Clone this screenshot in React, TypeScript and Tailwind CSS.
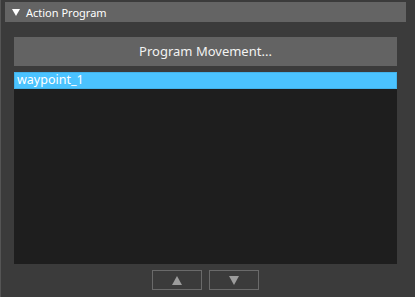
export default function App() {
	return (
		<div className="w-[415px] h-[297px] bg-[#3b3b3b] flex font-['Noto_Sans',sans-serif] text-white overflow-hidden">
			{/* left edge line */}
			<div className="w-px bg-[#555555]" />
			<div className="flex-1 flex flex-col pt-[2px]">
				{/* section header */}
				<div className="ml-[4px] mr-[9px] h-[20px] bg-[#646464] flex items-center pl-[7px] gap-[6px]">
					<svg width="8" height="7" viewBox="0 0 8 7">
						<polygon points="0,0 8,0 4,7" fill="#ffffff" />
					</svg>
					<span className="text-[11px] leading-none">Action Program</span>
				</div>

				<div className="ml-[13px] mr-[18px] mt-[15px] flex flex-col">
					<button
						type="button"
						className="h-[29px] bg-[#636363] text-[13px] text-[#f2f2f2] leading-none"
					>
						Program Movement...
					</button>
					<div className="mt-[6px] h-[192px] bg-[#1e1e1e] flex flex-col">
						<div className="h-[17px] bg-[#4bc3ff] border border-[#42b2ea] flex items-center pl-[2px] text-[12.5px] leading-none text-white">
							waypoint_1
						</div>
					</div>
					<div className="mt-[6px] flex justify-center gap-[7px]">
						<button
							type="button"
							className="w-[50px] h-[20px] border border-[#6a6a6a] flex items-center justify-center"
						>
							<svg width="10" height="9" viewBox="0 0 10 9">
								<polygon points="5,0 10,9 0,9" fill="#9c9c9c" />
							</svg>
						</button>
						<button
							type="button"
							className="w-[50px] h-[20px] border border-[#6a6a6a] flex items-center justify-center"
						>
							<svg width="10" height="9" viewBox="0 0 10 9">
								<polygon points="0,0 10,0 5,9" fill="#9c9c9c" />
							</svg>
						</button>
					</div>
				</div>
			</div>
		</div>
	);
}
